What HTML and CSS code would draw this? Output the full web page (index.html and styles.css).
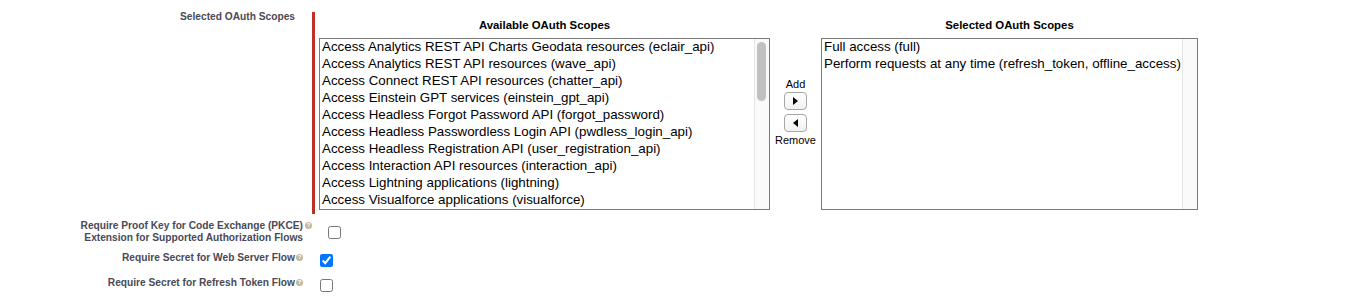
FILE: index.html
```html
<!DOCTYPE html>
<html lang="en">
<head>
<meta charset="utf-8">
<title>Selected OAuth Scopes</title>
<link rel="stylesheet" href="styles.css">
</head>
<body>
<div class="page">
  <div class="scopes-row">
    <div class="label-col">Selected OAuth Scopes</div>
    <div class="required-bar"></div>
    <div class="duallist">
      <div class="dl-header">Available OAuth Scopes</div>
      <div></div>
      <div class="dl-header">Selected OAuth Scopes</div>

      <div class="listbox" role="listbox">
        <div class="options">
          <div class="opt">Access Analytics REST API Charts Geodata resources (eclair_api)</div>
          <div class="opt">Access Analytics REST API resources (wave_api)</div>
          <div class="opt">Access Connect REST API resources (chatter_api)</div>
          <div class="opt">Access Einstein GPT services (einstein_gpt_api)</div>
          <div class="opt">Access Headless Forgot Password API (forgot_password)</div>
          <div class="opt">Access Headless Passwordless Login API (pwdless_login_api)</div>
          <div class="opt">Access Headless Registration API (user_registration_api)</div>
          <div class="opt">Access Interaction API resources (interaction_api)</div>
          <div class="opt">Access Lightning applications (lightning)</div>
          <div class="opt">Access Visualforce applications (visualforce)</div>
        </div>
        <div class="track"><div class="thumb"></div></div>
      </div>

      <div class="mover">
        <div class="mover-label">Add</div>
        <button class="mover-btn" type="button" aria-label="Add">
          <svg width="5" height="8" viewBox="0 0 5 8"><polygon points="0,0 5,4 0,8" fill="#000"/></svg>
        </button>
        <button class="mover-btn" type="button" aria-label="Remove">
          <svg width="5" height="8" viewBox="0 0 5 8"><polygon points="5,0 0,4 5,8" fill="#000"/></svg>
        </button>
        <div class="mover-label">Remove</div>
      </div>

      <div class="listbox" role="listbox">
        <div class="options">
          <div class="opt">Full access (full)</div>
          <div class="opt">Perform requests at any time (refresh_token, offline_access)</div>
        </div>
        <div class="track"></div>
      </div>
    </div>
  </div>

  <div class="check-row row-pkce">
    <div class="check-label">Require Proof Key for Code Exchange (PKCE)<span class="help help-overflow">?</span><br>Extension for Supported Authorization Flows</div>
    <div class="check-cell cell-pkce"><input type="checkbox"></div>
  </div>
  <div class="check-row row-web">
    <div class="check-label">Require Secret for Web Server Flow<span class="help">?</span></div>
    <div class="check-cell"><input type="checkbox" checked></div>
  </div>
  <div class="check-row row-refresh">
    <div class="check-label">Require Secret for Refresh Token Flow<span class="help">?</span></div>
    <div class="check-cell"><input type="checkbox"></div>
  </div>
</div>
</body>
</html>
```
FILE: styles.css
```css
* { box-sizing: border-box; }

html, body {
  margin: 0;
  padding: 0;
  background: #fff;
}

.page {
  width: 1346px;
  height: 303px;
  overflow: hidden;
  font-family: "Liberation Sans", Arial, Helvetica, sans-serif;
  color: #000;
}

.scopes-row {
  display: flex;
  align-items: flex-start;
}

.label-col {
  width: 300px;
  padding: 10px 5px 0 0;
  text-align: right;
  font-size: 10.2px;
  line-height: 13px;
  font-weight: bold;
  color: #4a4a56;
}

.required-bar {
  width: 3px;
  height: 202px;
  margin: 12px 0 0 12px;
  background: #c0302a;
}

.duallist {
  margin: 12px 0 0 4px;
  display: grid;
  grid-template-columns: 451px 51px 377px;
  grid-template-rows: 26px 172px;
}

.dl-header {
  padding-top: 6px;
  text-align: center;
  font-size: 11.4px;
  line-height: 14px;
  font-weight: bold;
  color: #000;
}

.listbox {
  display: flex;
  border: 1px solid #7a7a7a;
  background: #fff;
  overflow: hidden;
}

.options {
  flex: 1;
  min-width: 0;
}

.opt {
  height: 17px;
  padding: 0 2px 1px;
  font-size: 13.33px;
  line-height: 16px;
  white-space: nowrap;
  color: #000;
}

.track {
  width: 15px;
  flex: none;
  background: #fafafa;
  border-left: 1px solid #e6e6e6;
  padding: 3px 2px 0 2px;
}

.thumb {
  width: 9px;
  height: 59px;
  border-radius: 5px;
  background: #c1c1c1;
}

.mover {
  display: flex;
  flex-direction: column;
  align-items: center;
  padding-top: 40px;
}

.mover-label {
  font-size: 11px;
  line-height: 13px;
  color: #000;
}

.mover-btn {
  width: 23px;
  height: 18px;
  margin: 1px 0 0;
  padding: 0;
  display: flex;
  align-items: center;
  justify-content: center;
  border: 1px solid #a6a6a6;
  border-radius: 4px;
  background: linear-gradient(#ffffff, #f1f1f1);
}

.mover-btn + .mover-btn {
  margin-top: 4px;
}

.mover-btn + .mover-label {
  margin-top: 2px;
}

.check-row {
  display: flex;
  align-items: flex-start;
}

.row-pkce { margin-top: 4px; height: 32px; }
.row-web { height: 25px; }
.row-refresh { height: 25px; }

.check-label {
  width: 303px;
  padding-top: 2px;
  text-align: right;
  font-size: 10.2px;
  line-height: 12px;
  font-weight: bold;
  color: #4a4a56;
}

.help {
  display: inline-block;
  width: 7px;
  height: 7px;
  margin-left: 1px;
  overflow: hidden;
  border-radius: 50%;
  background: #c4b99c;
  color: #fff;
  font-size: 6px;
  line-height: 7px;
  text-align: center;
  vertical-align: baseline;
}

.help-overflow {
  margin-left: 2px;
  margin-right: -9px;
}

.check-cell {
  padding-left: 17px;
  padding-top: 4px;
  display: flex;
}

.cell-pkce {
  padding-left: 25px;
  padding-top: 8px;
}

.check-cell input {
  width: 13px;
  height: 13px;
  margin: 0;
}
```
